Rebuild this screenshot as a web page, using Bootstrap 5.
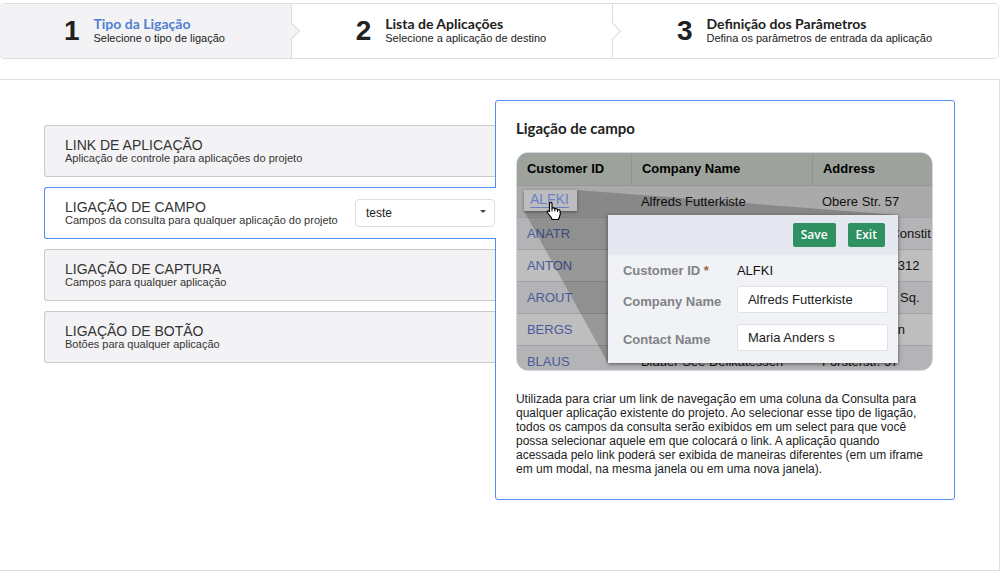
<!DOCTYPE html>
<html lang="pt-BR">
<head>
<meta charset="utf-8">
<meta name="viewport" content="width=device-width, initial-scale=1">
<title>Tipo da Ligação</title>
<link href="https://cdn.jsdelivr.net/npm/bootstrap@5.3.0/dist/css/bootstrap.min.css" rel="stylesheet">
<style>
  body { font-family: "Liberation Sans", Arial, sans-serif; font-size: 12px; line-height: 14px; color: #212121; background: #fff; }
  a { color: inherit; text-decoration: none; }

  /* wizard steps */
  .wizard { margin: 3px 4px 20px -1px; border: 1px solid #dededf; border-radius: 5px; }
  .wizard-step { position: relative; height: 54px; padding-right: 2px; gap: 14px; border-right: 1px solid #dededf; }
  .wizard-step:first-child { border-radius: 4px 0 0 4px; }
  .wizard-step:last-child { border-right: 0; }
  .wizard-step:not(:last-child)::after {
    content: ""; position: absolute; z-index: 2; top: 50%; right: 0; width: 13px; height: 13px;
    background: inherit; border: solid #dededf; border-width: 0 1px 1px 0;
    transform: translate(50%, -50%) rotate(-45deg);
  }
  .wizard-step.current { background: #f3f3f5; }
  .wizard-step.current .step-name { color: #5180cf; }
  .wizard-step:not(.current) { background: #fff; }
  .wizard-step:last-child { border-radius: 0 4px 4px 0; }
  .step-number { font-size: 28px; line-height: 28px; font-weight: 700; }
  .step-text { padding-bottom: 2px; }
  .step-name { font: 700 14px/16px Lato, sans-serif; }
  .step-note { font-size: 11px; line-height: 12px; }

  /* link kinds */
  .stage { margin: 0 3px 3px -1px; border: 1px solid #dededf; padding: 20px 44px 70px; }
  .kinds { padding-top: 25px; gap: 10px; }
  .kind { height: 52px; padding: 0 20px; border: 1px solid #c9c9ca; border-right: 0; border-radius: 3px 0 0 3px; background: #f3f3f5; color: #333; }
  .kind.chosen { position: relative; z-index: 1; margin-right: -1px; padding-right: 1px; border-color: #4f8fea; background: #fff; }
  .kind-name { font-size: 14px; line-height: 14px; }
  .kind-note { font-size: 11px; line-height: 12px; }
  .pick { position: relative; width: 140px; }
  .pick select { appearance: none; width: 100%; height: 28px; padding: 0 24px 0 10px; border: 1px solid #dededf; border-radius: 4px; background: #fff; font-size: 12px; color: #212121; }
  .pick::after { content: ""; position: absolute; right: 9px; top: 11px; border: 3px solid transparent; border-top-color: #444; border-bottom: 0; pointer-events: none; }

  /* description card */
  .about { flex: 0 0 50.5%; padding: 18px 21px 23px 20px; border: 1px solid #4f8fea; border-radius: 3px; }
  .about h2 { font: 700 15px/18px Lato, sans-serif; margin: 0 0 15px; }
  .about p { margin: 21px 0 0; }

  .demo { position: relative; height: 219px; overflow: hidden; border: 1px solid #d5d8e2; border-radius: 12px; color: #111; font-size: 13px; line-height: 16px; }
  .demo-grid { width: 100%; table-layout: fixed; border-collapse: separate; border-spacing: 0; white-space: nowrap; background: #b5b5b5; }
  .demo-grid th, .demo-grid td { height: 32px; padding: 0 0 0 10px; border-bottom: 1px solid #a0a2a6; }
  .demo-grid th { height: 33px; padding-bottom: 1px; background: #9da39c; border-color: #949893; color: #000; }
  .demo-grid th + th { border-left: 1px solid #90958f; }
  .demo-grid td a { color: #4b5a9c; }
  .demo-grid tbody tr:nth-child(even) { background: #b4b4b6; }
  .demo-grid tbody tr:nth-child(odd) { background: #bebebe; }
  .demo-grid tbody tr:first-child { background: #aaa; }
  .col-id { width: 114px; }
  .col-name { width: 181px; }
  .demo-beam { position: absolute; left: 0; top: 0; width: 415px; height: 217px; }
  .demo-link { position: absolute; left: 7px; top: 37px; width: 53px; height: 21px; padding: 2px 0 0 6px; background: #bdbdbf; box-shadow: 0 1px 3px #0006; font-size: 14px; line-height: 15px; color: #6b80c8; }
  .demo-link span { display: inline-block; border-bottom: 1px solid #6b80c8; }
  .demo-cursor { position: absolute; left: 29px; top: 48px; }

  .demo-form { position: absolute; left: 91px; top: 62px; width: 290px; height: 148px; background: #f1f2f6; box-shadow: 0 1px 4px #0008; }
  .demo-bar { height: 40px; padding: 0 13px 0 0; gap: 12px; background: #e5e8f0; border-bottom: 1px solid #e9ebf1; }
  .demo-bar button { height: 24px; padding: 0 8px; border: 0; border-radius: 2px; background: #2f9162; color: #fff; font: 600 12px/24px "Open Sans", sans-serif; }
  .demo-fields { padding: 2px 10px 0 15px; }
  .demo-row { height: 27px; margin-bottom: 11px; }
  .demo-row:first-child { margin-bottom: 2px; }
  .demo-row label, .demo-row .tag { width: 114px; font-weight: 700; color: #808285; }
  .demo-row label { padding-top: 4px; }
  .demo-row i { color: #a0623a; font-style: normal; }
  .demo-row input { min-width: 0; flex: 1; height: 27px; padding: 0 10px; border: 1px solid #dfe1e6; border-radius: 2px; background: #fff; color: #222; font-size: 13px; }
</style>
</head>
<body>
<nav class="wizard d-flex" aria-label="Etapas">
  <a href="#" class="wizard-step current d-flex flex-grow-1 align-items-center justify-content-center">
    <span class="step-number">1</span>
    <span class="step-text"><span class="step-name d-block">Tipo da Ligação</span><span class="step-note d-block">Selecione o tipo de ligação</span></span>
  </a>
  <a href="#" class="wizard-step d-flex flex-grow-1 align-items-center justify-content-center">
    <span class="step-number">2</span>
    <span class="step-text"><span class="step-name d-block">Lista de Aplicações</span><span class="step-note d-block">Selecione a aplicação de destino</span></span>
  </a>
  <a href="#" class="wizard-step d-flex flex-grow-1 align-items-center justify-content-center">
    <span class="step-number">3</span>
    <span class="step-text"><span class="step-name d-block">Definição dos Parâmetros</span><span class="step-note d-block">Defina os parâmetros de entrada da aplicação</span></span>
  </a>
</nav>

<main class="stage d-flex align-items-start">
  <div class="kinds d-flex flex-column flex-fill">
    <button type="button" class="kind text-start">
      <span class="kind-name d-block">LINK DE APLICAÇÃO</span>
      <span class="kind-note d-block">Aplicação de controle para aplicações do projeto</span>
    </button>
    <div class="kind chosen d-flex align-items-center justify-content-between">
      <label for="campo">
        <span class="kind-name d-block">LIGAÇÃO DE CAMPO</span>
        <span class="kind-note d-block">Campos da consulta para qualquer aplicação do projeto</span>
      </label>
      <div class="pick"><select id="campo"><option>teste</option></select></div>
    </div>
    <button type="button" class="kind text-start">
      <span class="kind-name d-block">LIGAÇÃO DE CAPTURA</span>
      <span class="kind-note d-block">Campos para qualquer aplicação</span>
    </button>
    <button type="button" class="kind text-start">
      <span class="kind-name d-block">LIGAÇÃO DE BOTÃO</span>
      <span class="kind-note d-block">Botões para qualquer aplicação</span>
    </button>
  </div>

  <section class="about">
    <h2>Ligação de campo</h2>
    <div class="demo">
      <table class="demo-grid">
        <colgroup><col class="col-id"><col class="col-name"><col></colgroup>
        <thead><tr><th>Customer ID</th><th>Company Name</th><th>Address</th></tr></thead>
        <tbody>
          <tr><td></td><td>Alfreds Futterkiste</td><td>Obere Str. 57</td></tr>
          <tr><td><a href="#">ANATR</a></td><td></td><td>Avda. de la Constit</td></tr>
          <tr><td><a href="#">ANTON</a></td><td></td><td>Mataderos&nbsp; 2312</td></tr>
          <tr><td><a href="#">AROUT</a></td><td></td><td>120 Hanover Sq.</td></tr>
          <tr><td><a href="#">BERGS</a></td><td></td><td>Berguvsvägen</td></tr>
          <tr><td><a href="#">BLAUS</a></td><td>Blauer See Delikatessen</td><td>Forsterstr. 57</td></tr>
        </tbody>
      </table>
      <svg class="demo-beam" viewBox="0 0 415 217" aria-hidden="true"><path d="M7 58 91 210V62H381L60 37Z" fill="#000" fill-opacity=".2"/></svg>
      <a href="#" class="demo-link"><span>ALFKI</span></a>
      <svg class="demo-cursor" width="17" height="20" viewBox="0 0 17 20" aria-hidden="true">
        <path d="M3.500 2.500C3.500 1 6 1 6 2.500V7.200C7 6.400 8.600 6.800 8.800 8 9.800 7.300 11.300 7.700 11.500 8.900 12.700 8.400 14.200 9 14.200 10.500V13.500L12.500 18.500H6L5.300 16.500 1.300 11.500C.6 10.100 2 9.200 3.500 10.500Z" fill="#fff" stroke="#000" stroke-width="1.200" stroke-linejoin="round"/>
        <path d="M6 7.200V10.500M8.800 8V10.500M11.500 8.900V11" stroke="#000" fill="none"/>
      </svg>
      <form class="demo-form">
        <div class="demo-bar d-flex align-items-center justify-content-end">
          <button type="button">Save</button><button type="button">Exit</button>
        </div>
        <div class="demo-fields">
          <div class="demo-row d-flex align-items-center"><span class="tag">Customer ID <i>*</i></span><span>ALFKI</span></div>
          <div class="demo-row d-flex align-items-center"><label for="empresa">Company Name</label><input id="empresa" value="Alfreds Futterkiste"></div>
          <div class="demo-row d-flex align-items-center"><label for="contato">Contact Name</label><input id="contato" value="Maria Anders s"></div>
        </div>
      </form>
    </div>
    <p>Utilizada para criar um link de navegação em uma coluna da Consulta para qualquer aplicação existente do projeto. Ao selecionar esse tipo de ligação, todos os campos da consulta serão exibidos em um select para que você possa selecionar aquele em que colocará o link. A aplicação quando acessada pelo link poderá ser exibida de maneiras diferentes (em um iframe em um modal, na mesma janela ou em uma nova janela).</p>
  </section>
</main>
<script src="https://cdn.jsdelivr.net/npm/bootstrap@5.3.0/dist/js/bootstrap.bundle.min.js"></script>
</body>
</html>
